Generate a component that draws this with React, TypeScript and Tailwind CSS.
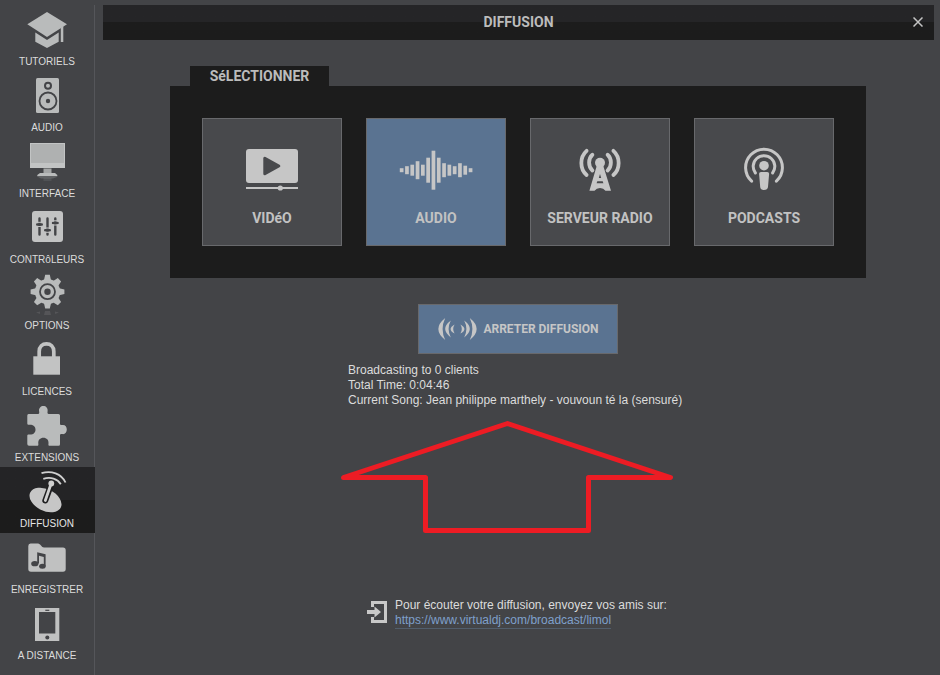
import type { ReactNode } from "react";

const LIGHT = "#b9bbbb";
const DARK = "#434447";

function SideIcon({ children }: { children: ReactNode }) {
  return (
    <svg width="48" height="48" viewBox="0 0 48 48" fill={LIGHT} aria-hidden="true">
      {children}
    </svg>
  );
}

const GEAR_TEETH = [0, 45, 90, 135, 180, 225, 270, 315];

const menu: { label: string; icon: ReactNode; active?: boolean }[] = [
  {
    label: "TUTORIELS",
    icon: (
      <SideIcon>
        <path d="M24 5 44 17.3 24 30 4.3 17.3Z" />
        <path d="M12.3 25.5 24 33 35.7 25.5V34.7L24 41 12.3 34.7Z" />
        <path d="M37.8 20.5 40.3 19V35H37.8Z" />
      </SideIcon>
    ),
  },
  {
    label: "AUDIO",
    icon: (
      <SideIcon>
        <rect x="13" y="5" width="23" height="35" rx="1.5" />
        <circle cx="25" cy="12.7" r="3" fill="none" stroke={DARK} strokeWidth="2" />
        <circle cx="25" cy="28" r="8.5" fill="none" stroke={DARK} strokeWidth="1.8" />
        <circle cx="25" cy="28" r="2.2" fill={DARK} />
      </SideIcon>
    ),
  },
  {
    label: "INTERFACE",
    icon: (
      <SideIcon>
        <rect x="7" y="4" width="35" height="25" fill="#c2c4c4" />
        <rect x="8" y="5" width="33" height="19" fill="#afb1b1" />
        <rect x="20.5" y="29.5" width="8" height="5" fill="#a4a6a6" />
        <path d="M17 34H32L34.3 36V37.2H14.3V36Z" />
        <path d="M15 38H34L30 39.5H18Z" opacity=".25" />
        <rect x="20.5" y="39" width="8" height="3" opacity=".12" />
      </SideIcon>
    ),
  },
  {
    label: "CONTRôLEURS",
    icon: (
      <SideIcon>
        <rect x="9" y="6" width="31" height="31" rx="3" fill="#c2c3c3" />
        <g stroke={DARK} strokeLinecap="round" strokeWidth="2.4">
          <path d="M16.5 13.5V29.5M24.5 13.5V29.5M32.3 13.5V29.5" />
          <path d="M14.2 19.5H18.8M22.2 25.2H26.8M30 18H34.6" />
        </g>
        <path
          d="M12.5 17.3H20.5M12.5 21.5H20.5M20.5 23H28.5M20.5 27.3H28.5M28.3 15.8H36.3M28.3 20H36.3"
          stroke="#c2c3c3"
        />
      </SideIcon>
    ),
  },
  {
    label: "OPTIONS",
    icon: (
      <SideIcon>
        <circle cx="24.5" cy="20.7" r="12.6" />
        {GEAR_TEETH.map((angle) => (
          <path
            key={angle}
            d="M20.8 10 22.2 3.8H26.8L28.2 10Z"
            transform={`rotate(${angle} 24.5 20.7)`}
          />
        ))}
        <circle cx="24.5" cy="20.7" r="7.5" fill="none" stroke={DARK} strokeWidth="1.8" />
        <circle cx="24.5" cy="20.7" r="3.2" fill={DARK} />
        <path d="M22 40H27L28 44H21ZM13 41.5 17 40.5V43ZM36 41.5 32 40.5V43Z" opacity=".15" />
      </SideIcon>
    ),
  },
  {
    label: "LICENCES",
    icon: (
      <SideIcon>
        <rect x="10.3" y="19.3" width="26.7" height="18.4" fill="#c2c3c3" />
        <path
          d="M16.2 20V14.5C16.2 9.5 19.4 6.9 23.5 6.9S30.8 9.5 30.8 14.5V20"
          fill="none"
          stroke="#c2c3c3"
          strokeWidth="3.7"
        />
      </SideIcon>
    ),
  },
  {
    label: "EXTENSIONS",
    icon: (
      <SideIcon>
        <path d="M5.5 11H15C16.6 11 16.3 9.6 16.1 8.3C15.7 5 17.8 3 20.4 3S25 5 24.6 8.3C24.4 9.6 24.2 11 25.8 11H35.5Q37 11 37 12.5V20.5C37 22.4 38.3 22.2 39.3 22C42 21.5 43.8 23.8 43.8 26.5S42 31.6 39.3 31.1C38.3 30.9 37 30.8 37 32.6V41.2Q37 42.7 35.5 42.7H26.2C25.2 42.7 25.4 41.5 25.5 40.4C25.8 37 23.6 34.8 20.4 34.8S15 37 15.3 40.4C15.4 41.5 15.6 42.7 14.6 42.7H6Q4.3 42.7 4.3 41V32.8C4.3 31.4 5.6 31.5 6.8 31.6C10 31.8 12.5 29.8 12.5 26.7S10 21.7 6.8 21.8C5.6 21.9 4.3 22 4.3 20.6V12.5Q4.3 11 5.5 11Z" />
      </SideIcon>
    ),
  },
  {
    label: "DIFFUSION",
    active: true,
    icon: (
      <SideIcon>
        <ellipse cx="22.5" cy="31" rx="17" ry="10.8" transform="rotate(26 22.5 31)" fill="#c6c6c6" />
        <path d="M22.3 31.5 28 16" stroke="#1e1e1f" strokeWidth="6" strokeLinecap="round" />
        <path d="M22.3 31.5 28 15" stroke="#d0d0d0" strokeWidth="2.8" strokeLinecap="round" />
        <circle cx="28.3" cy="14.5" r="2.9" fill="#d0d0d0" />
        <path
          d="M18.5 4.2C28 1.2 38.5 4.5 42.5 13.5M20.3 9.8C27.5 7.6 34.5 9.6 37.8 15.2"
          fill="none"
          stroke="#d0d0d0"
          strokeWidth="1.8"
        />
      </SideIcon>
    ),
  },
  {
    label: "ENREGISTRER",
    icon: (
      <SideIcon>
        <path
          d="M7.5 8.5H15C17.5 8.5 18.5 12.5 21 12.5H40Q42.7 12.5 42.7 15.2V34Q42.7 36.8 40 36.8H8Q5.3 36.8 5.3 34V11Q5.3 8.5 7.5 8.5Z"
          fill="#c0c1c1"
        />
        <path d="M14.2 17.2 22.6 19.3V31H20.8V22L16 20.8V28.5H14.2Z" fill={DARK} />
        <ellipse cx="11.8" cy="28.7" rx="3.6" ry="2.6" fill={DARK} />
        <ellipse cx="19.4" cy="31.3" rx="3.3" ry="2.5" fill={DARK} />
      </SideIcon>
    ),
  },
  {
    label: "A DISTANCE",
    icon: (
      <SideIcon>
        <rect x="12" y="7" width="24.3" height="33" fill="#c0c1c1" />
        <rect x="16" y="11" width="16.3" height="21.5" fill={DARK} />
        <rect x="22.3" y="8.7" width="4" height="1.2" fill={DARK} />
        <circle cx="24.3" cy="36.4" r="2" fill={DARK} />
      </SideIcon>
    ),
  },
];

function CardIcon({ children }: { children: ReactNode }) {
  return (
    <svg width="80" height="48" viewBox="0 0 80 48" fill="#c6c6c6" aria-hidden="true">
      {children}
    </svg>
  );
}

const WAVE = [4, 8, 11, 18, 11, 25, 39, 25, 14, 11, 8, 14, 9, 4];

const sources: { label: string; icon: ReactNode; active?: boolean }[] = [
  {
    label: "VIDéO",
    icon: (
      <CardIcon>
        <rect x="14" y="3" width="52" height="34" rx="3" />
        <path
          d="M32.8 12.2V27.8L46.8 20Z"
          fill="#48494c"
          stroke="#48494c"
          strokeWidth="3"
          strokeLinejoin="round"
        />
        <rect x="14" y="41" width="52" height="2" />
        <circle cx="48.3" cy="42" r="2.6" />
      </CardIcon>
    ),
  },
  {
    label: "AUDIO",
    active: true,
    icon: (
      <CardIcon>
        {WAVE.map((h, i) => (
          <rect key={i} x={3.8 + i * 5.3} y={24.2 - h / 2} width="3.7" height={h} />
        ))}
      </CardIcon>
    ),
  },
  {
    label: "SERVEUR RADIO",
    icon: (
      <CardIcon>
        <circle cx="40" cy="16.7" r="5" />
        <path d="M37 19H43L51 44.8H45.5Q43.5 42 40 42T34.5 44.8H29.4Z" />
        <path d="M40 28 41.2 32H38.8ZM37.3 35.3H42.7L43.4 37.3H36.6Z" fill="#48494c" />
        <g fill="none" stroke="#c6c6c6" strokeWidth="3.8" strokeLinecap="round">
          <path d="M32.4 8.7C28 12.5 28 20.7 32.4 24.5M26.6 4.8C19.6 11 19.6 23 26.6 29" />
          <path d="M47.6 8.7C52 12.5 52 20.7 47.6 24.5M53.4 4.8C60.4 11 60.4 23 53.4 29" />
        </g>
      </CardIcon>
    ),
  },
  {
    label: "PODCASTS",
    icon: (
      <CardIcon>
        <circle cx="40" cy="19.7" r="4.8" />
        <path d="M37 26H43.2Q45.2 26 45.1 28L44 41Q43.6 44 40 44T36.2 41L35.1 28Q35 26 37 26Z" />
        <g fill="none" stroke="#c6c6c6" strokeWidth="3" strokeLinecap="round">
          <path d="M27.6 35.2A18.4 18.4 0 1 1 52.4 35.2" />
          <path d="M31.4 27A10.8 10.8 0 1 1 48.6 27" />
        </g>
      </CardIcon>
    ),
  },
];

function Sidebar() {
  return (
    <nav className="mt-[5px] flex w-[95px] shrink-0 flex-col border-r border-[#55565a]">
      {menu.map((item) => (
        <button
          key={item.label}
          type="button"
          className={
            item.active
              ? "-mr-px flex h-[66px] flex-col items-center bg-linear-to-b from-[#242426] from-50% to-[#1c1c1c] to-50% pt-0.5 pr-px text-[#e6e6e6]"
              : "flex h-[66px] flex-col items-center pt-0.5 text-[#dcdcdc]"
          }
        >
          {item.icon}
          <span className="text-[10px] leading-[14px] whitespace-nowrap">{item.label}</span>
        </button>
      ))}
    </nav>
  );
}

export default function App() {
  return (
    <div className="flex min-h-screen bg-[#434447] font-['Liberation_Sans',Arial,sans-serif] text-[#d6d6d6]">
      <Sidebar />
      <main className="flex grow flex-col pt-[5px] pr-1.5 pl-2">
        <header className="grid h-[35px] grid-cols-[32px_1fr_32px] items-center bg-linear-to-b from-[#252527] from-50% to-[#1c1c1c] to-50% pb-0.5">
          <h1 className="col-start-2 text-center font-[Roboto,sans-serif] text-sm font-bold text-[#bcbcbc]">
            DIFFUSION
          </h1>
          <button type="button" aria-label="Fermer" className="flex h-full items-center justify-center">
            <svg width="10" height="10" viewBox="0 0 10 10" stroke="#c4c4c4" strokeWidth="1.5">
              <path d="M.5.5 9.5 9.5M9.5.5.5 9.5" />
            </svg>
          </button>
        </header>

        <div className="flex flex-col items-center pt-[26px] pr-px">
          <section>
            <h2 className="ml-5 h-5 w-[139px] bg-[#1c1c1c] text-center font-[Roboto,sans-serif] text-sm leading-5 font-bold text-[#bcbcbc]">
              SéLECTIONNER
            </h2>
            <div className="flex gap-6 bg-[#1c1c1c] p-8">
              {sources.map((source) => (
                <button
                  key={source.label}
                  type="button"
                  aria-pressed={!!source.active}
                  className={
                    source.active
                      ? "flex h-32 w-[140px] flex-col items-center border border-[#68696c] bg-[#5a7391] pt-[27px]"
                      : "flex h-32 w-[140px] flex-col items-center border border-[#68696c] bg-[#48494c] pt-[27px]"
                  }
                >
                  {source.icon}
                  <span className="mt-3.5 font-[Roboto,sans-serif] text-sm leading-5 font-bold whitespace-nowrap text-[#c2c2c2]">
                    {source.label}
                  </span>
                </button>
              ))}
            </div>
          </section>

          <button
            type="button"
            className="mt-[26px] flex h-[50px] w-[200px] items-center justify-center gap-1.5 border border-[#68696c] bg-[#5a7391] text-[#c6c6c6]"
          >
            <svg width="40" height="24" viewBox="0 0 40 24" fill="#c6c6c6" aria-hidden="true">
              <g id="waves">
                <path d="M8.2 1Q-5.5 12 8.2 23Q3 12 8.2 1Z" />
                <path d="M13.8 3.6Q2.6 12 13.8 20.4Q9.4 12 13.8 3.6Z" />
                <path d="M17.6 7.4Q9.6 12 17.6 16.6Q14.8 12 17.6 7.4Z" />
              </g>
              <use href="#waves" transform="translate(41 0) scale(-1 1)" />
            </svg>
            <span className="font-[Roboto,sans-serif] text-xs font-bold whitespace-nowrap">ARRETER DIFFUSION</span>
          </button>

          <div className="mt-[9px] min-w-[340px] text-xs leading-[15px] text-[#dcdcdc]">
            <p>Broadcasting to 0 clients</p>
            <p>Total Time: 0:04:46</p>
            <p>Current Song: Jean philippe marthely - vouvoun té la (sensuré)</p>
          </div>

          <svg
            className="mt-[13px] mr-[22px]"
            width="332"
            height="112"
            viewBox="0 0 332 112"
            fill="none"
            stroke="#ed1c24"
            strokeWidth="5"
            strokeLinejoin="round"
            aria-hidden="true"
          >
            <path d="M2.5 56.5 166.5 2.5 329.5 56.5H247.5V109.5H84.5V56.5Z" />
          </svg>

          <footer className="mt-[65px] flex gap-2">
            <svg className="mt-[3px]" width="20" height="22" viewBox="0 0 20 22" fill="#c8c8c8" aria-hidden="true">
              <path d="M4 0H20V22H4V16H7V19H17V3H7V6H4Z" />
              <path d="M0 9H7.5V5.5L14 11 7.5 16.5V13H0Z" />
            </svg>
            <div className="min-w-[274px] text-xs leading-[15px] text-[#dcdcdc]">
              <p>Pour écouter votre diffusion, envoyez vos amis sur:</p>
              <a
                href="https://www.virtualdj.com/broadcast/limol"
                className="inline-block border-b border-[#525e6c] text-[#7fa0cc]"
              >
                https://www.virtualdj.com/broadcast/limol
              </a>
            </div>
          </footer>
        </div>
      </main>
    </div>
  );
}
